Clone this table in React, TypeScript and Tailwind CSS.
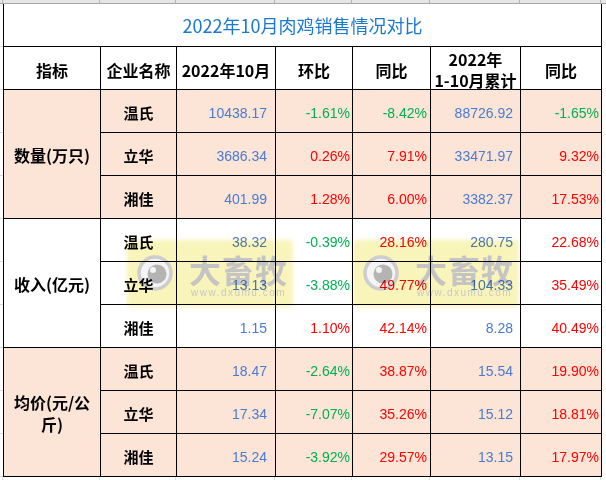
import React from 'react';

type Row = {
    name: string;
    month: string;
    mom: string;
    yoy: string;
    total: string;
    totalYoy: string;
};

type Group = {
    label: React.ReactNode;
    shaded: boolean;
    rows: Row[];
};

const groups: Group[] = [
    {
        label: '数量(万只)',
        shaded: true,
        rows: [
            { name: '温氏', month: '10438.17', mom: '-1.61%', yoy: '-8.42%', total: '88726.92', totalYoy: '-1.65%' },
            { name: '立华', month: '3686.34', mom: '0.26%', yoy: '7.91%', total: '33471.97', totalYoy: '9.32%' },
            { name: '湘佳', month: '401.99', mom: '1.28%', yoy: '6.00%', total: '3382.37', totalYoy: '17.53%' },
        ],
    },
    {
        label: '收入(亿元)',
        shaded: false,
        rows: [
            { name: '温氏', month: '38.32', mom: '-0.39%', yoy: '28.16%', total: '280.75', totalYoy: '22.68%' },
            { name: '立华', month: '13.13', mom: '-3.88%', yoy: '49.77%', total: '104.33', totalYoy: '35.49%' },
            { name: '湘佳', month: '1.15', mom: '1.10%', yoy: '42.14%', total: '8.28', totalYoy: '40.49%' },
        ],
    },
    {
        label: (
            <>
                均价(元/公
                <br />
                斤)
            </>
        ),
        shaded: true,
        rows: [
            { name: '温氏', month: '18.47', mom: '-2.64%', yoy: '38.87%', total: '15.54', totalYoy: '19.90%' },
            { name: '立华', month: '17.34', mom: '-7.07%', yoy: '35.26%', total: '15.12', totalYoy: '18.81%' },
            { name: '湘佳', month: '15.24', mom: '-3.92%', yoy: '29.57%', total: '13.15', totalYoy: '17.97%' },
        ],
    },
];

// widths of the sheet columns, borders included
const colWidths = ['w-[97px]', 'w-[76px]', 'w-[99px]', 'w-[77px]', 'w-[78px]', 'w-[90px]', 'w-[81px]'];

const cjk = "font-['Noto_Sans_CJK_SC',sans-serif]";
const num = "font-['Liberation_Sans','Noto_Sans_CJK_SC',sans-serif]";

const pct = (v: string) => (v.startsWith('-') ? 'text-[#00b050]' : 'text-[#ff0000]');

// translucent site stamp laid over the sheet, multiplied so cell text shows through
const Watermark = ({ className }: { className: string }) => (
    <div className={`pointer-events-none absolute top-[240px] h-[67px] w-[166px] mix-blend-multiply ${className}`}>
        <div className="absolute inset-0 rounded-sm bg-[#f6ef9c]/70 blur-[2px]" />
        <svg className="absolute left-[9px] top-[14px]" width="38" height="38" viewBox="0 0 38 38">
            <circle cx="19" cy="19" r="16" fill="#f4f4f4" stroke="#cdcdcd" strokeWidth="3.5" />
            <circle cx="21" cy="20" r="9.5" fill="#b4b4b4" />
            <circle cx="17" cy="16" r="3" fill="#f4f4f4" />
        </svg>
        <div className={`absolute left-[62px] top-[13px] text-[32px] font-bold leading-none tracking-[1px] text-[#c4c4c4] ${cjk}`}>
            大畜牧
        </div>
        <div className={`absolute left-[64px] top-[48px] text-[10px] leading-none tracking-[1.5px] text-[#c8c8c8] ${num}`}>
            www.dxumu.com
        </div>
    </div>
);

const App = () => {
    const cellBase = 'flex items-center pt-1';

    return (
        <div className="relative h-[480px] w-[606px] overflow-hidden bg-white">
            {/* sheet column header strip */}
            <div className="flex h-[4px] border-b border-[#a6a6a6] bg-[#e6e6e6]">
                <div className="w-[3px] border-r border-[#b5b5b5]" />
                {colWidths.map((w, i) => (
                    <div key={i} className={`${w} h-full border-r border-[#b5b5b5]`} />
                ))}
            </div>

            <div className="flex">
                <div className="flex w-[3px] flex-col">
                    {Array.from({ length: 11 }).map((_, i) => (
                        <div key={i} className="h-[43px] border-b border-[#dadada]" />
                    ))}
                </div>

                <div className="grid w-fit grid-cols-[96px_75px_98px_76px_77px_89px_80px] grid-rows-[repeat(11,42px)] gap-px border-x border-b border-black bg-black">
                    <div className={`col-span-7 flex items-center justify-center bg-white text-[18px] text-[#1b78d0] ${cjk}`}>
                        2022年10月肉鸡销售情况对比
                    </div>

                    {['指标', '企业名称', '2022年10月', '环比', '同比'].map((h) => (
                        <div key={h} className={`${cellBase} justify-center bg-white text-[16px] font-bold text-black ${cjk}`}>
                            {h}
                        </div>
                    ))}
                    <div className={`${cellBase} flex-col justify-center bg-white text-center text-[16px] font-bold leading-[21px] text-black ${cjk}`}>
                        <span>2022年</span>
                        <span>1-10月累计</span>
                    </div>
                    <div className={`${cellBase} justify-center bg-white text-[16px] font-bold text-black ${cjk}`}>同比</div>

                    {groups.map((g, gi) => {
                        const bg = g.shaded ? 'bg-[#fce4d6]' : 'bg-white';
                        return (
                            <React.Fragment key={gi}>
                                <div className={`row-span-3 flex items-center justify-center pt-0.5 text-center text-[16px] font-bold leading-[22px] text-black ${bg} ${cjk}`}>
                                    {g.label}
                                </div>
                                {g.rows.map((r, ri) => (
                                    <React.Fragment key={ri}>
                                        <div className={`${cellBase} justify-center text-[15px] font-bold text-black ${bg} ${cjk}`}>
                                            {r.name}
                                        </div>
                                        <div className={`${cellBase} justify-end pr-[8px] text-[14px] text-[#4a7bd2] ${bg} ${num}`}>
                                            {r.month}
                                        </div>
                                        <div className={`${cellBase} justify-end pr-[2px] text-[14px] ${pct(r.mom)} ${bg} ${num}`}>
                                            {r.mom}
                                        </div>
                                        <div className={`${cellBase} justify-end pr-[3px] text-[14px] ${pct(r.yoy)} ${bg} ${num}`}>
                                            {r.yoy}
                                        </div>
                                        <div className={`${cellBase} justify-end pr-[7px] text-[14px] text-[#4a7bd2] ${bg} ${num}`}>
                                            {r.total}
                                        </div>
                                        <div className={`${cellBase} justify-end pr-[2px] text-[14px] ${pct(r.totalYoy)} ${bg} ${num}`}>
                                            {r.totalYoy}
                                        </div>
                                    </React.Fragment>
                                ))}
                            </React.Fragment>
                        );
                    })}
                </div>
            </div>

            {/* gridlines below the table */}
            <div className="flex h-[4px]">
                <div className="w-[3px] border-r border-[#dadada]" />
                {colWidths.map((w, i) => (
                    <div key={i} className={`${w} border-r border-[#dadada]`} />
                ))}
            </div>

            <Watermark className="left-[127px]" />
            <Watermark className="left-[353px]" />
        </div>
    );
};

export default App;
